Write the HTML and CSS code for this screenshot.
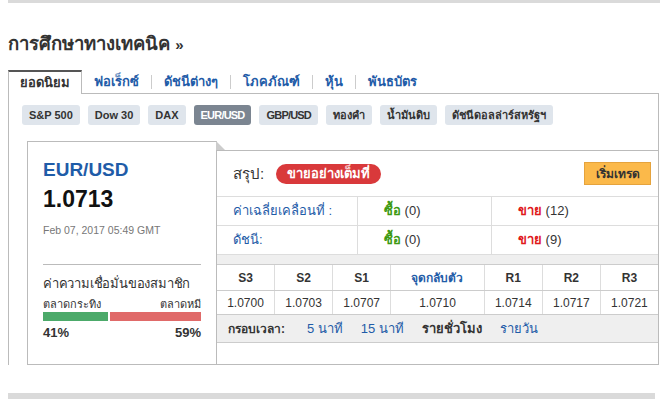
FILE: index.html
```html
<!DOCTYPE html>
<html lang="th">
<head>
  <meta charset="UTF-8">
  <title>การศึกษาทางเทคนิค</title>
  <link rel="stylesheet" href="styles.css">
</head>
<body>

<div class="page">
  <div class="topbar"></div>

  <h2 class="title">การศึกษาทางเทคนิค <span class="raquo">»</span></h2>

  <nav class="tabs">
    <a class="tab active">ยอดนิยม</a>
    <a class="tab">ฟอเร็กซ์</a>
    <span class="sep"></span>
    <a class="tab">ดัชนีต่างๆ</a>
    <span class="sep"></span>
    <a class="tab">โภคภัณฑ์</a>
    <span class="sep"></span>
    <a class="tab">หุ้น</a>
    <span class="sep"></span>
    <a class="tab">พันธบัตร</a>
  </nav>

  <div class="panel">
    <div class="chips">
      <span class="chip">S&amp;P 500</span>
      <span class="chip">Dow 30</span>
      <span class="chip">DAX</span>
      <span class="chip caps on">EUR/USD</span>
      <span class="chip caps">GBP/USD</span>
      <span class="chip">ทองคำ</span>
      <span class="chip">น้ำมันดิบ</span>
      <span class="chip">ดัชนีดอลล่าร์สหรัฐฯ</span>
    </div>

    <div class="main">
      <div class="card">
        <div class="pair">EUR/USD</div>
        <div class="price">1.0713</div>
        <div class="time">Feb 07, 2017 05:49 GMT</div>
        <div class="sentiment">
          <div class="sent-title">ค่าความเชื่อมั่นของสมาชิก</div>
          <div class="sent-labels"><span>ตลาดกระทิง</span><span>ตลาดหมี</span></div>
          <div class="bars">
            <div class="bar bull" style="width: 41%"></div>
            <div class="bar bear"></div>
          </div>
          <div class="sent-pct"><span>41%</span><span>59%</span></div>
        </div>
      </div>

      <div class="detail">
        <div class="summary">
          <span class="sum-label">สรุป:</span>
          <span class="pill">ขายอย่างเต็มที่</span>
          <button class="trade">เริ่มเทรด</button>
        </div>

        <div class="row">
          <div class="cell name">ค่าเฉลี่ยเคลื่อนที่ :</div>
          <div class="cell buy-col"><span class="buy">ซื้อ</span> (0)</div>
          <div class="cell sell-col"><span class="sell">ขาย</span> (12)</div>
        </div>
        <div class="row">
          <div class="cell name">ดัชนี:</div>
          <div class="cell buy-col"><span class="buy">ซื้อ</span> (0)</div>
          <div class="cell sell-col"><span class="sell">ขาย</span> (9)</div>
        </div>

        <div class="band"></div>

        <table class="pivots">
          <tr>
            <th>S3</th><th>S2</th><th>S1</th><th class="pivot">จุดกลับตัว</th><th>R1</th><th>R2</th><th>R3</th>
          </tr>
          <tr>
            <td>1.0700</td><td>1.0703</td><td>1.0707</td><td>1.0710</td><td>1.0714</td><td>1.0717</td><td>1.0721</td>
          </tr>
        </table>

        <div class="timeframe">
          <span class="tf-label">กรอบเวลา:</span>
          <a class="tf">5 นาที</a>
          <a class="tf">15 นาที</a>
          <a class="tf current">รายชั่วโมง</a>
          <a class="tf">รายวัน</a>
        </div>
      </div>
    </div>
  </div>

  <div class="bottombar"></div>
</div>

</body>
</html>
```

FILE: styles.css
```css
body {
  margin: 0;
  font-family: 'Liberation Sans', Arial, 'Noto Sans', sans-serif;
  color: #333;
  background: #fff;
}
.page {
  width: 652px;
  padding-left: 8px;
}
.topbar {
  height: 3px;
  background: #dadada;
}
.title {
  margin: 27px 0 0;
  height: 27px;
  font-size: 18.5px;
  font-weight: bold;
  color: #333;
  line-height: 27px;
}
.raquo {
  font-size: 15px;
}
.tabs {
  display: flex;
  align-items: center;
  margin-top: 13px;
  height: 23px;
  position: relative;
  z-index: 1;
}
.tab {
  padding: 0 12px;
  font-size: 13px;
  font-weight: bold;
  color: #1f5ca8;
  line-height: 21px;
  white-space: nowrap;
}
.tab.active {
  box-sizing: border-box;
  width: 74px;
  height: 24px;
  padding: 0;
  margin-bottom: -1px;
  text-align: center;
  color: #333;
  background: #fff;
  border: 1px solid #bbb;
  border-top: 2px solid #555;
  border-bottom: none;
}
.sep {
  width: 1px;
  height: 14px;
  background: #ccc;
}
.panel {
  box-sizing: border-box;
  width: 651px;
  height: 272px;
  border: 1px solid #bbb;
  border-bottom: none;
  display: flex;
  flex-direction: column;
}
.chips {
  display: flex;
  gap: 8px;
  padding: 11px 0 0 13px;
}
.chip {
  height: 20px;
  line-height: 20px;
  padding: 0 7px;
  background: #dfe5ec;
  border-radius: 3px;
  font-size: 11px;
  font-weight: bold;
  color: #333;
  white-space: nowrap;
}
.chip.caps {
  letter-spacing: -0.8px;
}
.chip.on {
  background: #7b8591;
  color: #fff;
}
.main {
  flex: 1;
  display: flex;
  margin: 16px 0 0 18px;
  border-bottom: 1px solid #bbb;
}
.card {
  box-sizing: border-box;
  width: 190px;
  border: 1px solid #bbb;
  border-bottom: none;
  padding: 17px 15px 0 15px;
}
.pair {
  font-size: 19px;
  font-weight: bold;
  color: #1f5ca8;
  line-height: 22px;
}
.price {
  font-size: 23px;
  font-weight: bold;
  color: #111;
  line-height: 30px;
  margin-top: 3px;
}
.time {
  font-size: 10.5px;
  color: #777;
  margin-top: 10px;
}
.sentiment {
  margin-top: 28px;
  border-top: 1px solid #bbb;
  padding-top: 10px;
}
.sent-title {
  font-size: 13px;
  color: #333;
  line-height: 18px;
  letter-spacing: -0.2px;
}
.sent-labels, .sent-pct {
  display: flex;
  justify-content: space-between;
}
.sent-labels {
  font-size: 11px;
  margin-top: 4px;
  line-height: 14px;
}
.bars {
  display: flex;
  gap: 2px;
  height: 9px;
  margin-top: 1px;
}
.bar.bull {
  background: #4caa6a;
}
.bar.bear {
  flex: 1;
  background: #e06a69;
}
.sent-pct {
  font-size: 13px;
  font-weight: bold;
  margin-top: 4px;
}
.detail {
  flex: 1;
  margin-top: 9px;
  border-top: 1px solid #bbb;
  position: relative;
}
.detail::before {
  content: '';
  position: absolute;
  left: -1px;
  top: -10px;
  border-left: 9px solid #ccc;
  border-top: 9px solid transparent;
}
.summary {
  display: flex;
  align-items: center;
  height: 45px;
  padding: 0 7px 0 16px;
  border-bottom: 1px solid #ddd;
}
.sum-label {
  font-size: 15px;
  color: #333;
  width: 43px;
}
.pill {
  background: #d9393b;
  color: #fff;
  font-size: 13px;
  font-weight: bold;
  padding: 0 11px;
  height: 20px;
  line-height: 20px;
  border-radius: 10px;
}
.trade {
  margin-left: auto;
  width: 67px;
  height: 23px;
  background: #fbb94a;
  border: 1px solid #e5a33d;
  font-family: inherit;
  font-size: 12px;
  font-weight: bold;
  color: #333;
  padding: 0;
}
.row {
  display: flex;
  height: 28px;
  border-bottom: 1px solid #ddd;
  font-size: 13px;
}
.cell {
  line-height: 28px;
}
.name {
  width: 124px;
  padding-left: 16px;
  color: #1f5ca8;
  border-right: 1px solid #ddd;
}
.buy-col {
  width: 107px;
  padding-left: 26px;
  border-right: 1px solid #ddd;
}
.sell-col {
  padding-left: 26px;
}
.buy {
  color: #3d9a12;
  font-weight: bold;
}
.sell {
  color: #e0191b;
  font-weight: bold;
}
.band {
  height: 9px;
  background: #efefef;
  border-bottom: 1px solid #ccc;
}
.pivots {
  width: 100%;
  border-collapse: collapse;
  font-size: 12px;
}
.pivots th, .pivots td {
  border-left: 1px solid #ddd;
  border-bottom: 1px solid #ccc;
  text-align: center;
  width: 58px;
  padding: 0;
}
.pivots th {
  height: 25px;
  font-weight: bold;
}
.pivots th:first-child, .pivots td:first-child {
  border-left: none;
}
.pivots th.pivot {
  color: #1f5ca8;
  width: 95px;
}
.pivots td {
  height: 23px;
}
.timeframe {
  display: flex;
  align-items: center;
  height: 27px;
  background: #efefef;
  border-bottom: 1px solid #ccc;
  padding-left: 11px;
  font-size: 13px;
}
.tf-label {
  font-size: 12px;
  font-weight: bold;
  margin-right: 13px;
}
.tf {
  color: #1f5ca8;
  margin: 0 9px;
  position: relative;
}
.tf.current {
  color: #333;
  font-weight: bold;
}
.tf.current::after {
  content: '';
  position: absolute;
  left: 22px;
  bottom: -9px;
  border: 5px solid transparent;
  border-bottom-color: #fff;
}
.bottombar {
  height: 7px;
  width: 647px;
  margin-top: 28px;
  background: #dadada;
}
```
